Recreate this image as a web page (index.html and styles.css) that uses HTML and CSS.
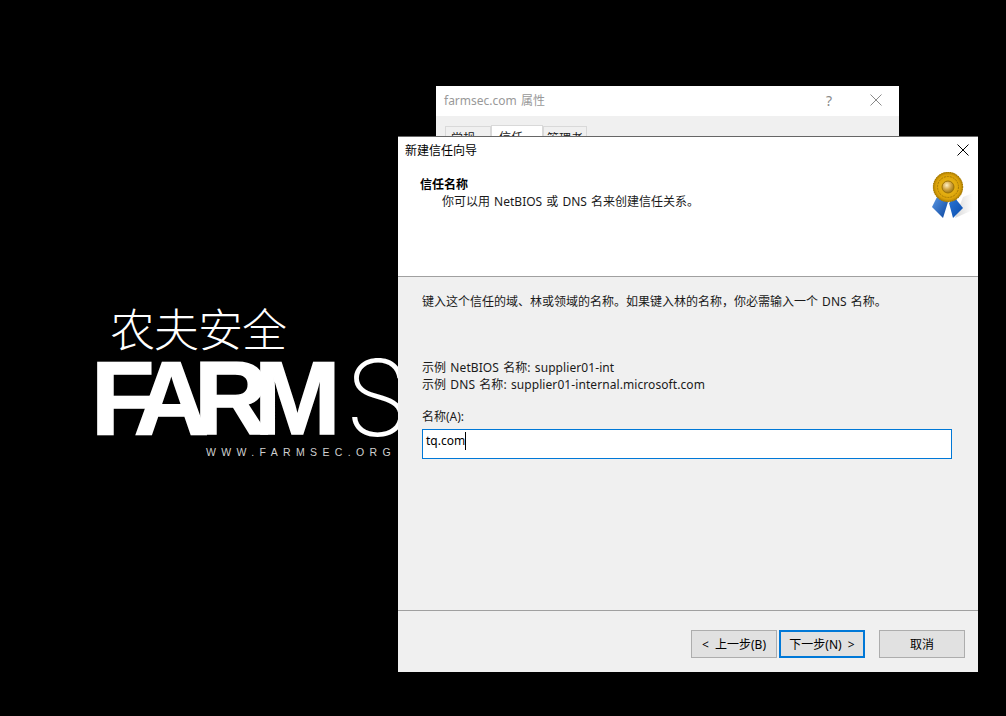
FILE: index.html
```html
<!DOCTYPE html>
<html lang="zh-CN">
<head>
    <meta charset="UTF-8">
    <meta name="viewport" content="width=device-width, initial-scale=1.0">
    <title>新建信任向导</title>
    <link rel="stylesheet" href="styles.css">
</head>
<body>
    <div class="logo">
        <div class="logo-cn">农夫安全</div>
        <div class="logo-en"><span class="logo-farm">FARM</span><span class="logo-sec">S</span></div>
        <div class="logo-url">WWW.FARMSEC.ORG</div>
    </div>

    <div class="props-window">
        <div class="props-title">
            <span class="props-name">farmsec.com 属性</span>
            <span class="props-help">?</span>
            <svg class="props-close" width="12" height="12" viewBox="0 0 12 12"><path d="M.5.5l11 11M11.5.5l-11 11" stroke="#8a8a8a" fill="none"/></svg>
        </div>
        <div class="props-tabs">
            <div class="props-tab">常规</div>
            <div class="props-tab props-tab-active">信任</div>
            <div class="props-tab props-tab-last">管理者</div>
        </div>
    </div>

    <div class="wizard">
        <div class="wizard-title">
            <span>新建信任向导</span>
            <svg class="wizard-close" width="12" height="12" viewBox="0 0 12 12"><path d="M.5.5l11 11M11.5.5l-11 11" stroke="#000" fill="none"/></svg>
        </div>
        <div class="wizard-head">
            <div class="head-text">
                <div class="head-name">信任名称</div>
                <div class="head-desc">你可以用 NetBIOS 或 DNS 名来创建信任关系。</div>
            </div>
            <svg class="medal" width="42" height="50" viewBox="0 0 42 50">
                <defs>
                    <linearGradient id="ribbonLeft" x1="0" y1="0" x2="1" y2="1">
                        <stop offset="0" stop-color="#5f9ce6"/>
                        <stop offset="1" stop-color="#0a45a0"/>
                    </linearGradient>
                    <linearGradient id="ribbonRight" x1="0" y1="0" x2="1" y2="1">
                        <stop offset="0" stop-color="#2a76d6"/>
                        <stop offset="1" stop-color="#0a4cac"/>
                    </linearGradient>
                    <linearGradient id="shadow" x1="0" y1="0" x2="1" y2="0">
                        <stop offset="0" stop-color="#d8d8d8"/>
                        <stop offset="1" stop-color="#ffffff"/>
                    </linearGradient>
                    <radialGradient id="gold" cx="0.5" cy="0.5" r="0.5">
                        <stop offset="0" stop-color="#eec020"/>
                        <stop offset="0.8" stop-color="#dba208"/>
                        <stop offset="1" stop-color="#b08004"/>
                    </radialGradient>
                    <radialGradient id="boss" cx="0.4" cy="0.35" r="0.7">
                        <stop offset="0" stop-color="#fff0c4"/>
                        <stop offset="0.5" stop-color="#d4a848"/>
                        <stop offset="1" stop-color="#94700c"/>
                    </radialGradient>
                </defs>
                <path d="M32 25L42 21V38L24 46Z" fill="url(#shadow)"/>
                <path d="M7 23L1 35L12 46L17 30Z" fill="url(#ribbonLeft)"/>
                <path d="M24 26L32 36L22 46L18 31Z" fill="url(#ribbonRight)"/>
                <circle cx="17" cy="15" r="15" fill="url(#gold)"/>
                <circle cx="17" cy="15" r="14.6" fill="none" stroke="#a87c04" stroke-width="1.2" stroke-dasharray="1.1 1.1"/>
                <circle cx="17" cy="15" r="10.5" fill="none" stroke="#a87c04" stroke-width="1" stroke-dasharray="2 1"/>
                <circle cx="17" cy="15" r="6" fill="url(#boss)" stroke="#9c7208" stroke-width="1"/>
            </svg>
        </div>
        <div class="wizard-body">
            <p class="intro">键入这个信任的域、林或领域的名称。如果键入林的名称，你必需输入一个 DNS 名称。</p>
            <div class="examples">
                <div>示例 NetBIOS 名称: supplier01-int</div>
                <div>示例 DNS 名称: supplier01-internal.microsoft.com</div>
            </div>
            <div class="field-label">名称(A):</div>
            <div class="field"><span>tq.com</span><span class="caret"></span></div>
        </div>
        <div class="wizard-foot">
            <button class="btn">&lt; 上一步(B)</button>
            <button class="btn btn-default">下一步(N) &gt;</button>
            <button class="btn btn-cancel">取消</button>
        </div>
    </div>
</body>
</html>
```

FILE: styles.css
```css
* {
    box-sizing: border-box;
}

body {
    margin: 0;
    width: 1006px;
    height: 716px;
    overflow: hidden;
    position: relative;
    background: #000;
    font-family: "Noto Sans", "Noto Sans CJK SC", sans-serif;
    font-size: 12px;
    word-spacing: 1px;
    color: #1a1a1a;
}

/* logo behind the windows */
.logo {
    position: absolute;
    left: 96px;
    top: 305px;
    width: 302px;
    overflow: hidden;
    color: #fff;
}
.logo-cn {
    margin-left: 14px;
    height: 51px;
    font-family: "Noto Sans CJK SC", sans-serif;
    font-weight: 200;
    font-size: 45px;
    line-height: 46px;
    letter-spacing: -1px;
}
.logo-en {
    display: flex;
    align-items: center;
    height: 84px;
    white-space: nowrap;
}
.logo-farm {
    font-family: "Liberation Sans", sans-serif;
    font-weight: 700;
    font-size: 104px;
    line-height: 84px;
    letter-spacing: -15px;
    margin-left: -5px;
    -webkit-text-stroke: 1.5px #fff;
}
.logo-sec {
    font-family: "Inter", sans-serif;
    font-weight: 200;
    font-size: 106px;
    line-height: 84px;
    margin-left: 19px;
}
.logo-url {
    margin: 5px 0 0 110px;
    font-family: "Liberation Sans", sans-serif;
    font-size: 10.5px;
    line-height: 14px;
    letter-spacing: 5.35px;
    white-space: nowrap;
    color: #d0d0d0;
}

/* window behind the wizard */
.props-window {
    position: absolute;
    left: 436px;
    top: 86px;
    width: 463px;
    height: 60px;
    background: #f0f0f0;
}
.props-title {
    display: flex;
    align-items: center;
    height: 30px;
    padding: 0 8px 2px;
    background: #fff;
    font-size: 12px;
    color: #999;
}
.props-name {
    flex: 1;
}
.props-help {
    margin-right: 38px;
    font-size: 14px;
    color: #8a8a8a;
}
.props-close {
    margin-right: 9px;
}
.props-tabs {
    display: flex;
    align-items: flex-end;
    height: 30px;
    padding-left: 9px;
}
.props-tab {
    width: 46px;
    height: 20px;
    padding: 2px 0 0 5px;
    border: 1px solid #d9d9d9;
    border-bottom: 0;
    background: #f0f0f0;
}
.props-tab-active {
    width: 52px;
    height: 21px;
    padding-left: 7px;
    background: #fff;
}
.props-tab-last {
    width: 44px;
    padding-left: 3px;
    overflow: hidden;
}

/* wizard dialog */
.wizard {
    position: absolute;
    left: 398px;
    top: 136px;
    width: 580px;
    height: 536px;
    display: flex;
    flex-direction: column;
    background: #f0f0f0;
    border-top: 1px solid #666;
}
.wizard-title {
    display: flex;
    align-items: center;
    justify-content: space-between;
    flex: none;
    height: 28px;
    padding: 0 9px 2px 7px;
    background: #fff;
    color: #000;
}
.wizard-head {
    display: flex;
    justify-content: space-between;
    flex: none;
    height: 112px;
    padding: 11px 5px 0 22px;
    background: #fff;
    border-bottom: 1px solid #a0a0a0;
}
.head-name {
    font-weight: 700;
    line-height: 17px;
    color: #000;
}
.head-desc {
    padding-left: 22px;
    line-height: 17px;
}
.medal {
    margin-top: -4px;
}
.wizard-body {
    flex: 1;
    padding: 0 26px 0 24px;
    border-bottom: 1px solid #a0a0a0;
}
.intro {
    margin: 16px 0 0;
    line-height: 17px;
}
.examples {
    margin-top: 49px;
    line-height: 17px;
    letter-spacing: 0.08px;
}
.field-label {
    margin-top: 15px;
    line-height: 17px;
}
.field {
    display: flex;
    align-items: flex-start;
    height: 30px;
    margin-top: 4px;
    padding: 2px 0 0 3px;
    background: #fff;
    border: 1px solid #0078d7;
    color: #000;
    line-height: 17px;
}
.caret {
    width: 1px;
    height: 18px;
    background: #000;
}
.wizard-foot {
    display: flex;
    flex: none;
    height: 61px;
    padding: 19px 13px 0 0;
    justify-content: flex-end;
}
.btn {
    width: 86px;
    height: 28px;
    margin-left: 2px;
    padding: 0;
    font: inherit;
    word-spacing: 3px;
    color: #000;
    background: #e1e1e1;
    border: 1px solid #adadad;
}
.btn-default {
    border: 2px solid #0078d7;
}
.btn-cancel {
    margin-left: 14px;
}
```
